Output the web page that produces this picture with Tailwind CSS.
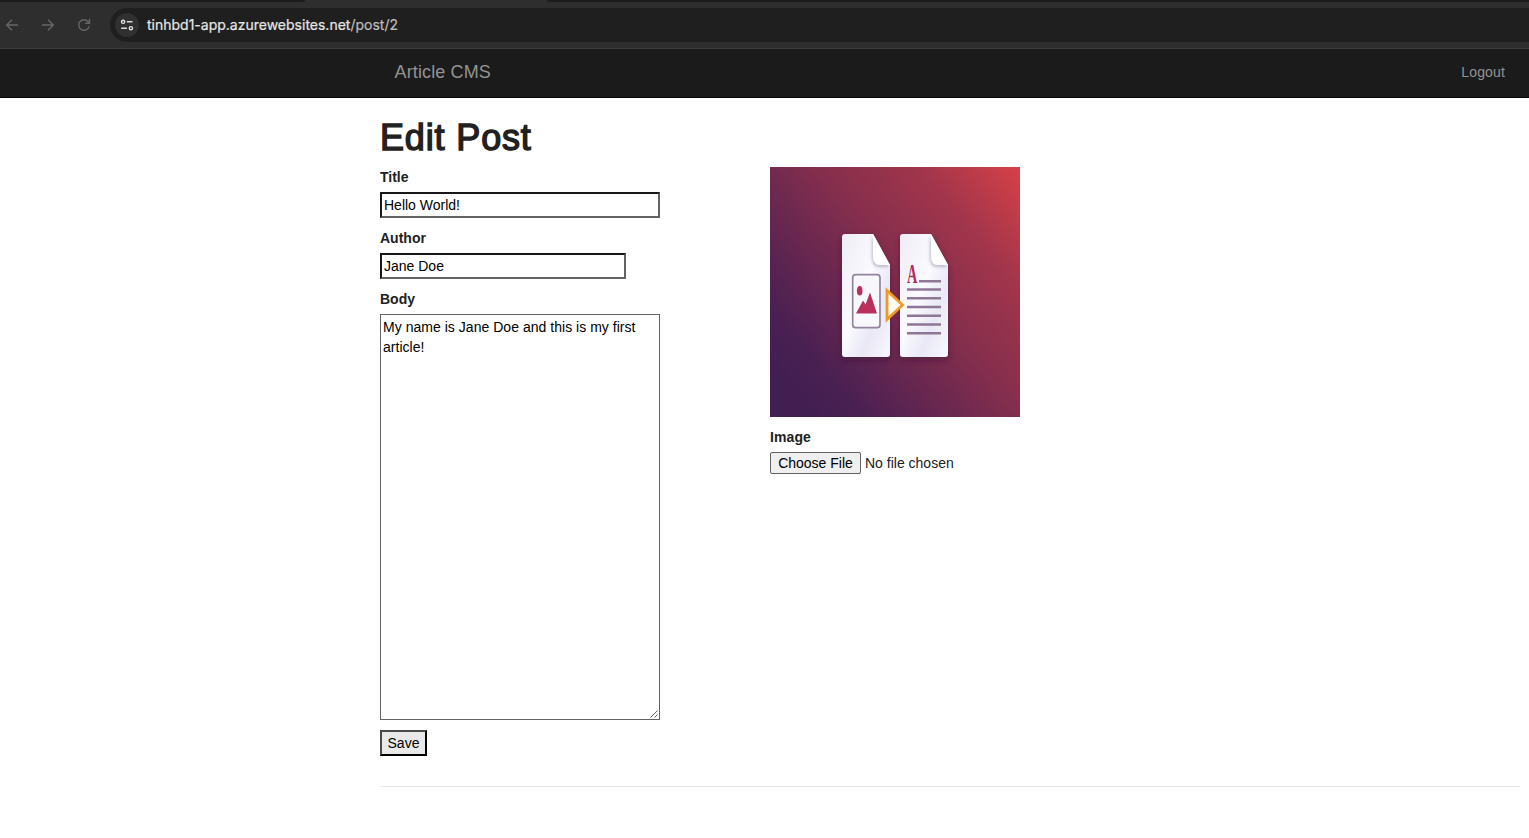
<!DOCTYPE html>
<html lang="en">
<head>
<meta charset="utf-8">
<title>Edit Post - Article CMS</title>
<script src="https://cdn.jsdelivr.net/npm/@tailwindcss/browser@4"></script>
</head>
<body class="h-[838px] overflow-hidden bg-white font-['Liberation_Sans',Arial,sans-serif] text-sm leading-5 text-[#212121]">
<header class="flex h-[49px] flex-col border-b border-[#3c3c3c] bg-[#2e2e2e]">
  <div class="flex h-0.5 shrink-0 justify-between">
    <div class="w-[305px] rounded-br-[4px] bg-[#1c1c1c]"></div>
    <div class="w-[982px] rounded-bl-[4px] bg-[#1c1c1c]"></div>
  </div>
  <div class="mt-1.5 flex h-[34px] items-center">
    <svg class="ml-1 size-4 shrink-0" viewBox="0 0 16 16" fill="none" stroke="#666" stroke-width="1.4"><path d="M14 8H3M8 2.7 2.7 8 8 13.3"/></svg>
    <svg class="ml-5 size-4 shrink-0" viewBox="0 0 16 16" fill="none" stroke="#666" stroke-width="1.4"><path d="M2 8h11M8 2.7 13.300 8 8 13.300"/></svg>
    <svg class="ml-5 size-4 shrink-0" viewBox="0 0 16 16" fill="none" stroke="#666" stroke-width="1.4"><path d="M13.200 9.300A5.300 5.300 0 1 1 12.300 4.800L13.500 6.200M13.500 2v4.300H9.200"/></svg>
    <div class="ml-[18px] flex h-[34px] flex-1 items-center rounded-l-full bg-[#1f1f1f] pl-[5px]">
      <div class="flex size-6 items-center justify-center rounded-full bg-[#303030]">
        <svg class="size-4" viewBox="0 0 16 16" fill="none" stroke="#dedede" stroke-width="1.4"><circle cx="4.100" cy="4.800" r="1.600"/><path d="M7.800 4.800h5.700M2.200 11.200h5.700"/><circle cx="11.900" cy="11.200" r="1.600"/></svg>
      </div>
      <span class="ml-2 whitespace-pre font-[Inter,sans-serif] text-[14px] text-[#bdbdbd] [-webkit-text-stroke:0.2px]"><span class="text-[#e6e6e6]">tinhbd1-app.azurewebsites.net</span>/post/2</span>
    </div>
  </div>
</header>
<nav class="flex h-[49px] items-center justify-between border-b border-[#080808] bg-[#1b1b1b] pr-6 pl-[394.5px] text-[#939393]">
  <a class="pb-0.5 text-lg tracking-[0.13px]">Article CMS</a>
  <a class="pb-0.5 tracking-[0.15px]">Logout</a>
</nav>
<main class="ml-[380px] mr-[9px] border-b border-[#e8e8e8] pt-[19px] pb-[30px]">
  <h1 class="mb-[9px] h-10 pt-px text-[36px] leading-10 tracking-[0.85px] [-webkit-text-stroke:1.4px_#212121]">Edit Post</h1>
  <form class="mt-2.5 flex items-start">
    <div class="flex w-[390px] flex-col items-start">
      <label class="mb-[5px] font-bold">Title</label>
      <input class="mb-2.5 h-[26px] w-[280px] border-2 border-t-[#181818] border-l-[#181818] border-r-[#636363] border-b-[#636363] px-0.5 text-black" value="Hello World!">
      <label class="mb-[5px] font-bold">Author</label>
      <input class="mb-2.5 h-[26px] w-[246px] border-2 border-t-[#181818] border-l-[#181818] border-r-[#636363] border-b-[#636363] px-0.5 text-black" value="Jane Doe">
      <label class="mb-[5px] font-bold">Body</label>
      <div class="relative mb-2.5 h-[406px] w-[280px]">
        <textarea class="block size-full resize-none border border-[#636363] p-0.5 tracking-[0.03px] text-black">My name is Jane Doe and this is my first article!</textarea>
        <svg class="absolute right-0.5 bottom-0.5 size-2" viewBox="0 0 8 8" stroke="#555" stroke-width=".9"><path d="M.5 7.500 7.500.5M4.500 7.500l3-3"/></svg>
      </div>
      <button type="button" class="h-[26px] w-[47px] border-2 border-t-[#4a4a4a] border-l-[#4a4a4a] border-r-black border-b-black bg-[#e9e9e9] text-black">Save</button>
    </div>
    <div class="flex flex-col items-start">
      <svg class="mb-2.5 size-[250px]" viewBox="0 0 250 250">
        <defs>
          <linearGradient id="bg" x1="10" y1="210" x2="255" y2="5" gradientUnits="userSpaceOnUse"><stop offset="0" stop-color="#421f51"/><stop offset=".12" stop-color="#4a2052"/><stop offset=".5" stop-color="#832e4d"/><stop offset=".75" stop-color="#a1354b"/><stop offset="1" stop-color="#d64147"/></linearGradient>
          <linearGradient id="paper" x1="0" y1="0" x2="1" y2="1"><stop offset="0" stop-color="#eeedf6"/><stop offset=".45" stop-color="#fafaff"/><stop offset=".7" stop-color="#e9e8f5"/><stop offset="1" stop-color="#f8f8fe"/></linearGradient>
          <filter id="shadow" x="-20%" y="-20%" width="140%" height="140%"><feDropShadow dx="0" dy="3" stdDeviation="3" flood-color="#351333" flood-opacity=".5"/></filter>
          <filter id="fold" x="-30%" y="-30%" width="160%" height="160%"><feDropShadow dx="-1" dy="2" stdDeviation="1.500" flood-color="#666080" flood-opacity=".4"/></filter>
        </defs>
        <rect width="250" height="250" fill="url(#bg)"/>
        <g filter="url(#shadow)" fill="url(#paper)">
          <path d="M75 67h28l17 31v89q0 3-3 3H75q-3 0-3-3V70q0-3 3-3Z"/>
          <path d="M133 67h28l17 31v89q0 3-3 3h-42q-3 0-3-3V70q0-3 3-3Z"/>
        </g>
        <g fill="#fff" filter="url(#fold)">
          <path d="M103 67v22q0 9 7 9h10Z"/>
          <path d="M161 67v22q0 9 7 9h10Z"/>
        </g>
        <rect x="82.700" y="107.700" width="27.300" height="53" rx="3" fill="#f8f7fc" stroke="#93849d" stroke-width="1.700"/>
        <ellipse cx="89.700" cy="123.800" rx="2.800" ry="4.800" fill="#b9305d"/>
        <path d="m86 146.500 7-13 2.500 4 4.500-12 7 21Z" fill="#b9305d"/>
        <path d="M117 123.500v29l15.500-14.500Z" fill="#fffaf4" stroke="#f09a25" stroke-width="2.800"/>
        <text transform="translate(137 116) scale(.53 1)" font-family="Liberation Serif, serif" font-weight="bold" font-size="27" fill="#b52b5b">A</text>
        <path d="M149 114.200h22M137 122.500h34M137 131.300h34M137 140h34M137 148.700h34M137 157.500h34M137 166.300h34" fill="none" stroke="#8e7795" stroke-width="2.600"/>
      </svg>
      <label class="mb-[5px] font-bold tracking-[0.1px]">Image</label>
      <div class="flex h-[22px] items-center gap-1">
        <button type="button" class="h-[22px] w-[91px] rounded-[2px] border border-[#636363] bg-[#efefef] text-black">Choose File</button>
        <span>No file chosen</span>
      </div>
    </div>
  </form>
</main>
</body>
</html>
